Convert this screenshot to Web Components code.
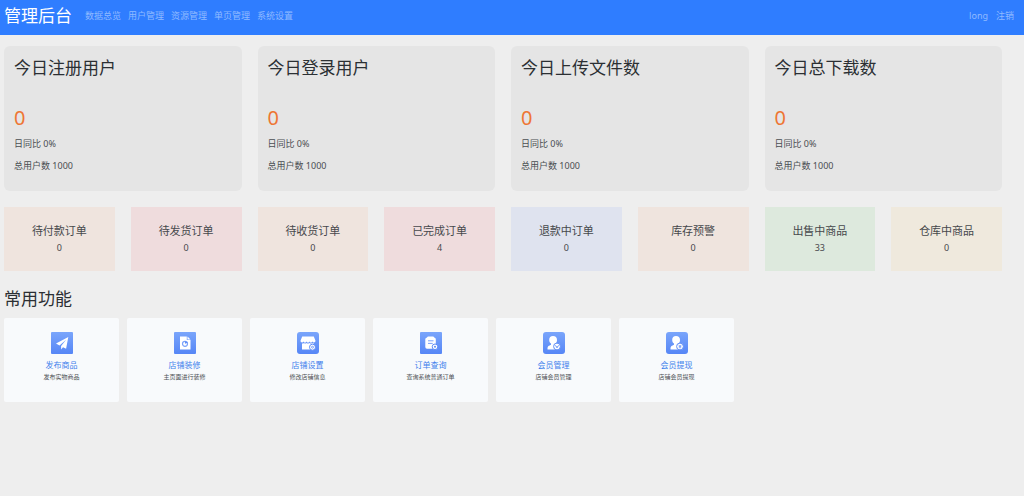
<!DOCTYPE html>
<html lang="zh-CN">
<head>
<meta charset="utf-8">
<meta name="viewport" content="width=device-width, initial-scale=1">
<title>管理后台</title>
<style>
body{margin:0;background:#eee;color:#2b2f33;font-family:"Noto Sans","Noto Sans CJK SC",sans-serif;font-size:9px;line-height:14px}
</style>
</head>
<body>
<admin-nav brand="管理后台">
  <nav-link>数据总览</nav-link>
  <nav-link>用户管理</nav-link>
  <nav-link>资源管理</nav-link>
  <nav-link>单页管理</nav-link>
  <nav-link>系统设置</nav-link>
  <nav-link slot="end">long</nav-link>
  <nav-link slot="end">注销</nav-link>
</admin-nav>
<admin-page>
  <card-grid kind="stats">
    <stat-card value="0" ratio="0%" total="1000">今日注册用户</stat-card>
    <stat-card value="0" ratio="0%" total="1000">今日登录用户</stat-card>
    <stat-card value="0" ratio="0%" total="1000">今日上传文件数</stat-card>
    <stat-card value="0" ratio="0%" total="1000">今日总下载数</stat-card>
  </card-grid>
  <card-grid kind="orders">
    <order-card tone="sand" count="0">待付款订单</order-card>
    <order-card tone="rose" count="0">待发货订单</order-card>
    <order-card tone="sand" count="0">待收货订单</order-card>
    <order-card tone="rose" count="4">已完成订单</order-card>
    <order-card tone="blue" count="0">退款中订单</order-card>
    <order-card tone="sand" count="0">库存预警</order-card>
    <order-card tone="green" count="33">出售中商品</order-card>
    <order-card tone="cream" count="0">仓库中商品</order-card>
  </card-grid>
  <feature-section heading="常用功能">
    <feature-card icon="send" note="发布实物商品">发布商品</feature-card>
    <feature-card icon="page" note="主页面进行装修">店铺装修</feature-card>
    <feature-card icon="shop" note="修改店铺信息">店铺设置</feature-card>
    <feature-card icon="order" note="查询系统普通订单">订单查询</feature-card>
    <feature-card icon="member" note="店铺会员管理">会员管理</feature-card>
    <feature-card icon="cash" note="店铺会员提现">会员提现</feature-card>
  </feature-section>
</admin-page>
<script>
class Base extends HTMLElement{
  connectedCallback(){
    if(this.shadowRoot)return;
    this.attachShadow({mode:'open'}).innerHTML=this.render();
  }
  attr(n){return this.getAttribute(n)||''}
}

customElements.define('admin-nav',class extends Base{
  render(){return `<style>
    :host{display:block;background:#2f7dff}
    nav{display:flex;align-items:center;min-height:35px;padding:0 10px 0 4px;box-sizing:border-box}
    .brand{font-size:17px;line-height:24px;color:#fff;text-decoration:none;margin:0 13px 4px 0}
    .links{display:flex;gap:7px;margin-bottom:3px}
    .end{margin-left:auto;gap:8px}
  </style>
  <nav><a class="brand" href="#">${this.attr('brand')}</a>
  <div class="links"><slot></slot></div><div class="links end"><slot name="end"></slot></div></nav>`}
});

customElements.define('nav-link',class extends Base{
  render(){return `<style>
    :host{display:block}
    a{color:#8fbaff;text-decoration:none;white-space:nowrap}
    a:hover{color:#fff}
  </style><a href="#"><slot></slot></a>`}
});

customElements.define('admin-page',class extends Base{
  render(){return `<style>
    :host{display:block}
    main{display:flex;flex-direction:column;gap:16px;padding:11px 22px 24px 4px}
  </style><main><slot></slot></main>`}
});

customElements.define('card-grid',class extends Base{
  render(){return `<style>
    :host{display:grid;gap:16px}
    :host([kind=stats]){grid-template-columns:repeat(4,1fr)}
    :host([kind=orders]){grid-template-columns:repeat(8,1fr)}
  </style><slot></slot>`}
});

customElements.define('stat-card',class extends Base{
  render(){return `<style>
    :host{display:block;background:#e5e5e5;border-radius:6px;padding:10px 10px 18px}
    h2{margin:0 0 26px;font-size:17px;line-height:24px;font-weight:400}
    .value{margin:0 0 7px;font-size:20px;line-height:24px;color:#ee7634}
    p{margin:0;color:#4a4e52}
    p+p{margin-top:8px}
  </style>
  <h2><slot></slot></h2>
  <div class="value">${this.attr('value')}</div>
  <p>日同比 ${this.attr('ratio')}</p><p>总用户数 ${this.attr('total')}</p>`}
});

customElements.define('order-card',class extends Base{
  render(){return `<style>
    :host{display:block;padding:16px 0;text-align:center;color:#46484c}
    :host([tone=sand]){background:#efe4de}
    :host([tone=rose]){background:#efdcdd}
    :host([tone=blue]){background:#dfe3ef}
    :host([tone=green]){background:#dde9dd}
    :host([tone=cream]){background:#efe9dd}
    h3{margin:0 0 2px;font-size:11px;line-height:16px;font-weight:400}
    p{margin:0}
  </style><h3><slot></slot></h3><p>${this.attr('count')}</p>`}
});

customElements.define('feature-section',class extends Base{
  render(){return `<style>
    :host{display:block}
    h2{margin:0 0 7px;font-size:17px;line-height:24px;font-weight:400}
    .grid{display:grid;grid-template-columns:repeat(auto-fill,115px);gap:8px}
  </style><h2>${this.attr('heading')}</h2><div class="grid"><slot></slot></div>`}
});

const PERSON=`<path fill="#fff" d="M10 4c2.600 0 4 1.600 4 3.900 0 1.700-.7 2.800-1.600 3.600v1.200l3.800 2V17.500H4.500v-1.200c0-2.200 1.400-2.400 3.500-3.500v-1.300C7 10.700 6.200 9.600 6.200 7.900 6.200 5.600 7.500 4 10 4z"/>
    <circle cx="14" cy="14.500" r="3.400" fill="#fff" stroke="#5d8cf7"/>`;
const ICONS={
  send:`<path fill="#fff" d="M17.300 5 5 11.600l3.500 1.900 6.600-5.800-5 6.300v3.500l1.900-2.300 3.100 1.500z"/>`,
  page:`<path fill="#fff" d="M6 4.500h6.800v3.600h3.700v9.400H6z"/><path fill="#fff" d="M13.500 4.500 16.500 7.400h-3z"/>
    <circle cx="11" cy="11.800" r="2.500" fill="none" stroke="#7ba2fa" stroke-width="1.200"/><path d="M11 11.800V9.200l3 1.200z" fill="#5d8cf7"/>`,
  shop:`<path fill="#fff" d="M5.200 4.500h11.600l1.700 4.300c0 2-2.500 2.200-3.100.7-.6 1.500-2.400 1.500-2.900 0-.6 1.500-2.400 1.500-3 0-.6 1.500-2.400 1.500-3 0-.6 1.500-3 1.300-3-.7z"/>
    <path fill="#fff" d="M5 11.500q1.200.2 2-.5 1.300 1 2.500 0 1.400 1 3 0 1.400 1 2.700 0 .8.700 1.800.5v6H5z"/>
    <circle cx="15.500" cy="15.200" r="3" fill="#fff" stroke="#5d8cf7"/><circle cx="15.500" cy="15.200" r="1" fill="none" stroke="#5d8cf7" stroke-width=".8"/>`,
  order:`<path fill="#fff" d="M6.600 5.800 7.900 4.500h5.400l1.300 1.300q1.200 0 1.200 1.500v9.400H7q-1.700 0-1.700-1.600V7.300q0-1.500 1.300-1.500z"/>
    <path stroke="#7ba2fa" stroke-width="1" d="M8 8.800h5.500M8 11.400h4.700"/>
    <circle cx="15" cy="14.800" r="2.800" fill="#fff" stroke="#5d8cf7"/><circle cx="15" cy="14.800" r="1" fill="#5d8cf7"/>`,
  member:PERSON+`<path d="m12.500 13.400 1.500 2.400 1.500-2.400" fill="none" stroke="#5d8cf7" stroke-width="1"/>`,
  cash:PERSON+`<path d="m12.700 12.800 1.300 1.600 1.300-1.600M14 14.200v2.200M12.600 14.900h2.800" fill="none" stroke="#5d8cf7" stroke-width=".8"/>`
};
const RADIUS={send:1,page:1,shop:3,order:1,member:3,cash:3};

customElements.define('feature-card',class extends Base{
  render(){const i=this.attr('icon');return `<style>
    :host{display:block;background:#f8fafc;border-radius:2px;text-align:center}
    a{display:flex;flex-direction:column;align-items:center;padding:14px 0 19px;text-decoration:none;white-space:nowrap}
    svg{display:block;width:22px;height:22px;margin-bottom:5px}
    .name{font-size:8px;line-height:12px;color:#3f80ec}
    .note{font-size:6px;line-height:12px;color:#4c5054}
  </style><a href="#">
  <svg viewBox="0 0 22 22" aria-hidden="true"><defs><linearGradient id="g" x2="0" y2="1"><stop stop-color="#7aa5fb"/><stop offset="1" stop-color="#5686f6"/></linearGradient></defs>
  <rect width="22" height="22" rx="${RADIUS[i]}" fill="url(#g)"/>${ICONS[i]}</svg>
  <span class="name"><slot></slot></span><span class="note">${this.attr('note')}</span></a>`}
});
</script>
</body>
</html>
